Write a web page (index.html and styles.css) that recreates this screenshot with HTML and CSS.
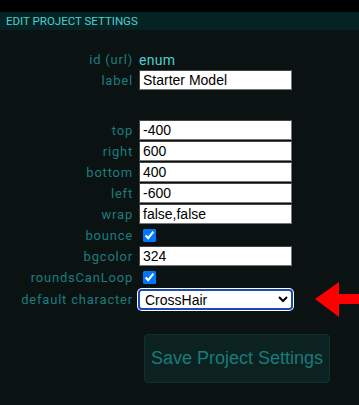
FILE: index.html
```html
<html>
<head>
<meta name="viewport" content="width=device-width, initial-scale=1">
<title>Edit Project Settings</title>
<link rel="stylesheet" href="styles.css">
</head>
<body>

<div id="topbar"></div>

<div id="header">
	<div class="title">EDIT PROJECT SETTINGS</div>
</div>

<div id="content">
<table class="settings">
	<tr class="info">
		<td class="key">id (url)</td>
		<td class="val">enum</td>
	</tr>
	<tr>
		<td class="key">label</td>
		<td><input type="text" value="Starter Model"></td>
	</tr>
	<tr class="spacer"><td></td><td></td></tr>
	<tr>
		<td class="key">top</td>
		<td><input type="text" value="-400"></td>
	</tr>
	<tr>
		<td class="key">right</td>
		<td><input type="text" value="600"></td>
	</tr>
	<tr>
		<td class="key">bottom</td>
		<td><input type="text" value="400"></td>
	</tr>
	<tr>
		<td class="key">left</td>
		<td><input type="text" value="-600"></td>
	</tr>
	<tr>
		<td class="key">wrap</td>
		<td><input type="text" value="false,false"></td>
	</tr>
	<tr>
		<td class="key">bounce</td>
		<td><input type="checkbox" checked></td>
	</tr>
	<tr>
		<td class="key">bgcolor</td>
		<td><input type="text" value="324"></td>
	</tr>
	<tr>
		<td class="key">roundsCanLoop</td>
		<td><input type="checkbox" checked></td>
	</tr>
	<tr class="pick">
		<td class="key">default character</td>
		<td class="pickcell">
			<select>
				<option>CrossHair</option>
				<option>Turtle</option>
				<option>Arrow</option>
			</select>
			<!-- annotation arrow -->
			<svg class="pointer" width="46" height="36" viewBox="0 0 46 36">
				<polygon points="0,17 24,0 24,12 46,12 46,22 24,22 24,35" fill="#ff0000"/>
			</svg>
		</td>
	</tr>
	<tr class="actions">
		<td></td>
		<td><button class="save">Save Project Settings</button></td>
	</tr>
</table>
</div>

</body>
</html>
```

FILE: styles.css
```css
body {
	margin: 0;
	background-color: #0b1212;
	font-family: Roboto, "Liberation Sans", sans-serif;
}

#topbar {
	height: 12px;
	background-color: #000;
}

#header {
	background-color: #062323;
	height: 18px;
	padding-left: 6px;
}

#header .title {
	color: #4ccfd0;
	font-size: 11.5px;
	line-height: 18px;
}

#content {
	padding-top: 19px;
}

.settings {
	border-collapse: collapse;
	margin-left: 21px;
}

.settings td {
	padding: 0;
	height: 21px;
}

.settings td.key {
	text-align: right;
	color: #1a7e80;
	font-size: 13px;
	letter-spacing: 0.8px;
	padding-right: 6px;
	width: 112px;
	white-space: nowrap;
}

.settings td.val {
	color: #4ccfd0;
	font-size: 14px;
	letter-spacing: 0.3px;
}

.settings tr.spacer td {
	height: 29px;
}

.settings input[type=text] {
	box-sizing: border-box;
	width: 153px;
	height: 20px;
	margin: 0 0 1px 0;
	padding: 1px 3px;
	border: 1px solid #767676;
	border-top-color: #444;
	border-left-color: #444;
	background: #fff;
	font-family: "Liberation Sans", Arial, sans-serif;
	font-size: 14px;
	color: #000;
	display: block;
}

.settings input[type=checkbox] {
	margin: 0 0 0 4px;
	width: 13px;
	height: 13px;
	display: block;
}

.settings tr.pick td {
	height: 22px;
}

.pickcell {
	position: relative;
}

.settings select {
	box-sizing: border-box;
	width: 155px;
	height: 21px;
	margin-left: -1px;
	border: 2px solid #1c49b9;
	border-radius: 4px;
	box-shadow: 0 0 0 1px #fff;
	background: #fff;
	color: #000;
	font-family: "Liberation Sans", Arial, sans-serif;
	font-size: 14px;
	padding: 0 1px;
	display: block;
}

.pointer {
	position: absolute;
	left: 176px;
	top: -6px;
}

.settings tr.actions td {
	padding-top: 24px;
}

.save {
	margin-left: 5px;
	width: 186px;
	height: 49px;
	background-color: #0b2221;
	border: 1px solid #10302f;
	border-radius: 4px;
	color: #197b7c;
	font-family: "Liberation Sans", Arial, sans-serif;
	font-size: 18px;
	padding: 0;
}
```
